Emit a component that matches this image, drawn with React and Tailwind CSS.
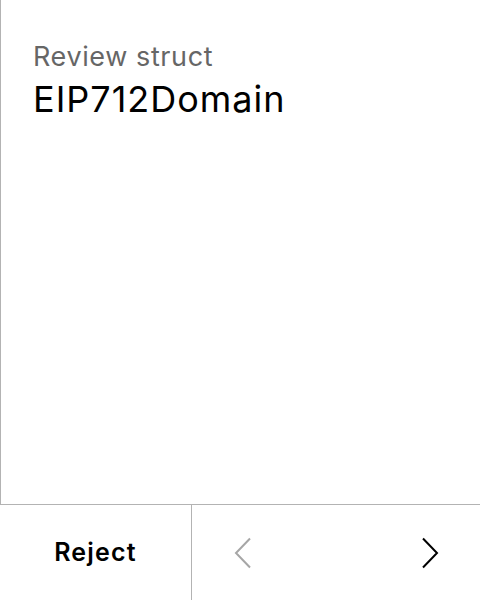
import React from "react";

const Chevron = ({ dir, className }) => (
  <svg width="18" height="32" viewBox="0 0 18 32" fill="none" className={className}>
    <path
      d={dir === "left" ? "M16 1.5 L2 16 L16 30.5" : "M2 1.5 L16 16 L2 30.5"}
      stroke="currentColor"
      strokeWidth="2"
    />
  </svg>
);

const App = () => {
  return (
    <div className="w-[480px] h-[600px] flex flex-col bg-white font-['Inter',sans-serif]">
      {/* Content */}
      <div className="h-[505px] border-l border-b border-[#b3b3b3] px-8 pt-[39px]">
        <p className="text-[27px] leading-[36px] tracking-[0.6px] text-[#666666]">Review struct</p>
        <h1 className="text-[36px] leading-[48px] tracking-[1px] text-black">EIP712Domain</h1>
      </div>

      {/* Navigation */}
      <div className="flex flex-1">
        <button className="w-[192px] border-r border-[#b3b3b3] text-[25px] font-semibold tracking-[1.2px] text-black">
          Reject
        </button>
        <div className="flex-1 flex items-center justify-between pl-[42px] pr-[41px]">
          <Chevron dir="left" className="text-[#a6a6a6]" />
          <Chevron dir="right" className="text-black" />
        </div>
      </div>
    </div>
  );
};

export default App;
